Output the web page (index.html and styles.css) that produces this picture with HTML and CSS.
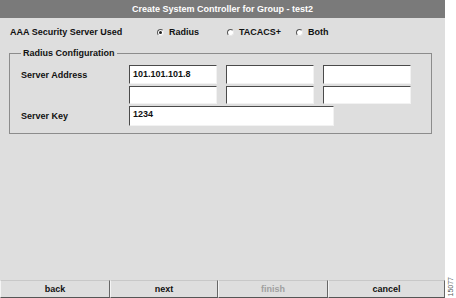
FILE: index.html
```html
<!DOCTYPE html>
<html>
<head>
<meta charset="utf-8">
<link rel="stylesheet" href="styles.css">
</head>
<body>
<div class="page">
  <div class="panel">
    <div class="title">Create System Controller for Group - test2</div>
    <div class="main">
      <div class="aaa-row">
        <span class="aaa-label">AAA Security Server Used</span>
        <span class="radio-item r1"><span class="radio checked"></span>Radius</span>
        <span class="radio-item r2"><span class="radio"></span>TACACS+</span>
        <span class="radio-item"><span class="radio"></span>Both</span>
      </div>
      <fieldset class="config">
        <legend>Radius Configuration</legend>
        <div class="grid">
          <span class="label">Server Address</span>
          <span class="field">101.101.101.8</span>
          <span class="field"></span>
          <span class="field"></span>
          <span class="label"></span>
          <span class="field"></span>
          <span class="field"></span>
          <span class="field"></span>
          <span class="label">Server Key</span>
          <span class="field key">1234</span>
        </div>
      </fieldset>
    </div>
    <div class="buttons">
      <div class="btn">back</div>
      <div class="btn">next</div>
      <div class="btn disabled">finish</div>
      <div class="btn last">cancel</div>
    </div>
  </div>
  <div class="side"><span class="fig">15077</span></div>
</div>
</body>
</html>
```

FILE: styles.css
```css
html, body {
  margin: 0;
  padding: 0;
  background: #fff;
}
body {
  font-family: "Liberation Sans", Arial, sans-serif;
  font-size: 9px;
  font-weight: bold;
  color: #111;
}
.page {
  display: flex;
  width: 456px;
  height: 298px;
}
.panel {
  width: 445px;
  height: 298px;
  background: #dedede;
  display: flex;
  flex-direction: column;
}
.title {
  height: 18px;
  line-height: 18px;
  background: #7a7a7a;
  color: #fff;
  text-align: center;
}
.main {
  flex: 1;
  padding-left: 9px;
}
.aaa-row {
  display: flex;
  align-items: center;
  height: 14px;
  margin-top: 7px;
  padding-left: 1px;
}
.aaa-label {
  width: 147px;
}
.radio-item {
  display: flex;
  align-items: center;
}
.r1 { width: 70px; }
.r2 { width: 69px; }
.radio {
  width: 7px;
  height: 7px;
  box-sizing: border-box;
  border-radius: 50%;
  border: 1px solid;
  border-color: #555 #e8e8e8 #e8e8e8 #555;
  background: #fff;
  margin-right: 5px;
  position: relative;
}
.radio.checked::after {
  content: "";
  position: absolute;
  left: 1px;
  top: 1px;
  width: 3px;
  height: 3px;
  border-radius: 50%;
  background: #222;
}
.config {
  margin: 8px 0 0 0;
  width: 423px;
  box-sizing: border-box;
  border: 1px solid #8c8c8c;
  padding: 6px 0 7px 11px;
}
.config legend {
  padding: 0 2px;
  margin-left: 0;
  line-height: 12px;
}
.grid {
  display: grid;
  grid-template-columns: 99px 88px 88px 88px;
  grid-template-rows: 19px 18px 20px;
  column-gap: 9px;
  row-gap: 2px;
  align-items: center;
}
.label {
  align-self: center;
}
.field {
  display: block;
  height: 100%;
  box-sizing: border-box;
  background: #fff;
  border: 1px solid;
  border-color: #4a4a4a #f2f2f2 #f2f2f2 #4a4a4a;
  padding: 0 0 0 3px;
  line-height: 16px;
}
.field.key {
  width: 205px;
  grid-column: 2 / span 3;
  line-height: 14px;
}
.buttons {
  display: grid;
  grid-template-columns: 110px 108px 110px 1fr;
  height: 18px;
}
.btn {
  box-sizing: border-box;
  border-top: 1px solid #c8c8c8;
  border-bottom: 1px solid #555;
  border-right: 1px solid #666;
  border-left: 1px solid #f4f4f4;
  text-align: center;
  line-height: 16px;
  color: #111;
}
.btn.disabled {
  color: #a0a0a0;
}
.side {
  flex: 1;
  display: flex;
  align-items: flex-end;
  justify-content: center;
  padding-bottom: 2px;
}
.fig {
  writing-mode: vertical-rl;
  transform: rotate(180deg);
  font-size: 7px;
  font-weight: normal;
  color: #555;
}
```
